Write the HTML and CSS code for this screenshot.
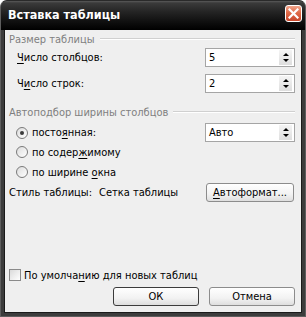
FILE: index.html
```html
<!DOCTYPE html>
<html lang="ru">
<head>
  <meta charset="UTF-8" />
  <title>Вставка таблицы</title>
  <link rel="stylesheet" href="styles.css">
</head>
<body>
  <div class="window">
    <div class="titlebar">
      <span class="title">Вставка таблицы</span>
      <span class="close">
        <svg width="11" height="11" viewBox="0 0 11 11">
          <path d="M1.5 1.5 L9.5 9.5 M9.5 1.5 L1.5 9.5" stroke="#fff" stroke-width="2.2" stroke-linecap="square"/>
        </svg>
      </span>
    </div>
    <div class="content">
      <div class="group">
        <span class="group-title">Размер таблицы</span>
        <span class="group-line"></span>
      </div>
      <div class="row row-cols">
        <span class="label"><u>Ч</u>исло столбцов:</span>
        <div class="spin"><span class="value">5</span><span class="arrows"><i class="up"></i><i class="down"></i></span></div>
      </div>
      <div class="row row-rows">
        <span class="label">Ч<u>и</u>сло строк:</span>
        <div class="spin"><span class="value">2</span><span class="arrows"><i class="up"></i><i class="down"></i></span></div>
      </div>

      <div class="group group-2">
        <span class="group-title">Автоподбор ширины столбцов</span>
        <span class="group-line"></span>
      </div>
      <div class="row row-fixed">
        <span class="radio checked"></span>
        <span class="radio-label">посто<u>я</u>нная:</span>
        <div class="spin"><span class="value">Авто</span><span class="arrows"><i class="up"></i><i class="down"></i></span></div>
      </div>
      <div class="row row-radio">
        <span class="radio"></span>
        <span class="radio-label">по содер<u>ж</u>имому</span>
      </div>
      <div class="row row-radio">
        <span class="radio"></span>
        <span class="radio-label">по ширине <u>о</u>кна</span>
      </div>
      <div class="row row-style">
        <span class="style-label">Стиль таблицы:</span>
        <span class="style-name">Сетка таблицы</span>
        <button class="btn btn-auto"><u>А</u>втоформат...</button>
      </div>

      <div class="row row-check">
        <span class="checkbox"></span>
        <span class="check-label">По умолча<u>н</u>ию для новых таблиц</span>
      </div>
      <div class="buttons">
        <button class="btn btn-ok">ОК</button>
        <button class="btn">Отмена</button>
      </div>
    </div>
  </div>
</body>
</html>
```
FILE: styles.css
```css
body {
  margin: 0;
  background: #ffffff;
  font-family: 'DejaVu Sans Condensed', 'DejaVu Sans', sans-serif;
}
.window {
  width: 306px;
  height: 317px;
  box-sizing: border-box;
  display: flex;
  flex-direction: column;
  background: #3c3c3c;
  border-radius: 7px 7px 0 0;
  border: 1px solid #5e5e5e;
  border-top-color: #2a2a2a;
}
.titlebar {
  height: 29px;
  display: flex;
  align-items: center;
  justify-content: space-between;
  padding: 0 3px 0 7px;
  background: linear-gradient(#5a5a5a 0, #3a3a3a 2px, #262626 10px, #111111 20px, #000000 29px);
  border-radius: 6px 6px 0 0;
}
.title {
  color: #ffffff;
  font-weight: bold;
  font-size: 12.5px;
  padding-bottom: 2px;
}
.close {
  width: 17px;
  height: 17px;
  box-sizing: border-box;
  display: flex;
  align-items: center;
  justify-content: center;
  background: linear-gradient(#f0a58c, #e06a48 45%, #c8462a);
  border: 1px solid #ffffff;
  border-radius: 3px;
  margin-bottom: 4px;
}
.content {
  flex: 1;
  margin: 0 3px 3px;
  padding: 2px 6px 0 4px;
  background: #efefef;
  border-left: 1px solid #1a1a1a;
  border-right: 1px solid #1a1a1a;
  border-bottom: 1px solid #1a1a1a;
  font-size: 11px;
  color: #000000;
  display: flex;
  flex-direction: column;
}
u {
  text-decoration: underline;
  text-underline-offset: 2px;
}
.group {
  height: 14px;
  display: flex;
  align-items: center;
  gap: 5px;
}
.group-title {
  color: #7f7f7f;
}
.group-line {
  flex: 1;
  height: 1px;
  background: #d0d0d0;
  border-bottom: 1px solid #ffffff;
}
.group-2 {
  margin-top: 12px;
}
.row {
  display: flex;
  align-items: center;
  white-space: nowrap;
}
.label {
  padding-left: 8px;
  flex: 1;
}
.row-cols {
  height: 19px;
  margin-top: 2px;
}
.row-rows {
  height: 19px;
  margin-top: 7px;
}
.spin {
  width: 90px;
  height: 19px;
  box-sizing: border-box;
  border: 1px solid #a5a5a5;
  background: #ffffff;
  display: flex;
  align-items: center;
  justify-content: space-between;
  padding: 0 2px 0 3px;
}
.arrows {
  width: 13px;
  height: 15px;
  display: flex;
  flex-direction: column;
  justify-content: center;
  align-items: center;
  gap: 3px;
  background: linear-gradient(#f4f4f4, #dedede);
}
.arrows i {
  width: 0;
  height: 0;
  border-left: 3px solid transparent;
  border-right: 3px solid transparent;
}
.arrows .up {
  border-bottom: 3px solid #000000;
}
.arrows .down {
  border-top: 3px solid #000000;
}
.row-fixed {
  height: 19px;
  margin-top: 4px;
}
.row-radio {
  height: 20px;
}
.radio {
  width: 10px;
  height: 10px;
  margin-left: 7px;
  margin-right: 4px;
  border: 1px solid #7a7a7a;
  border-radius: 50%;
  background: linear-gradient(135deg, #dcdcdc, #ffffff);
  display: flex;
  align-items: center;
  justify-content: center;
}
.radio.checked::after {
  content: "";
  width: 4px;
  height: 4px;
  border-radius: 50%;
  background: #3a3a3a;
}
.radio-label {
  flex: 1;
}
.row-style {
  height: 19px;
  margin-top: 1px;
}
.style-label {
  margin-right: 7px;
}
.style-name {
  flex: 1;
}
.btn {
  height: 19px;
  box-sizing: border-box;
  border: 1px solid #8c8c8c;
  border-radius: 3px;
  background: linear-gradient(#ffffff, #f2f2f2 60%, #dedede);
  font-family: inherit;
  font-size: 11px;
  color: #000000;
  padding: 0;
  margin: 0;
}
.btn-auto {
  width: 88px;
  margin-right: 1px;
}
.row-check {
  height: 14px;
  margin-top: auto;
}
.checkbox {
  width: 10px;
  height: 10px;
  margin-left: 0;
  margin-right: 3px;
  border: 1px solid #8a8a8a;
  background: linear-gradient(135deg, #dadada, #ffffff);
}
.buttons {
  display: flex;
  justify-content: flex-end;
  gap: 10px;
  margin-top: 5px;
  margin-bottom: 6px;
}
.buttons .btn {
  width: 86px;
}
.btn-ok {
  border-color: #3c3c3c;
}
```
